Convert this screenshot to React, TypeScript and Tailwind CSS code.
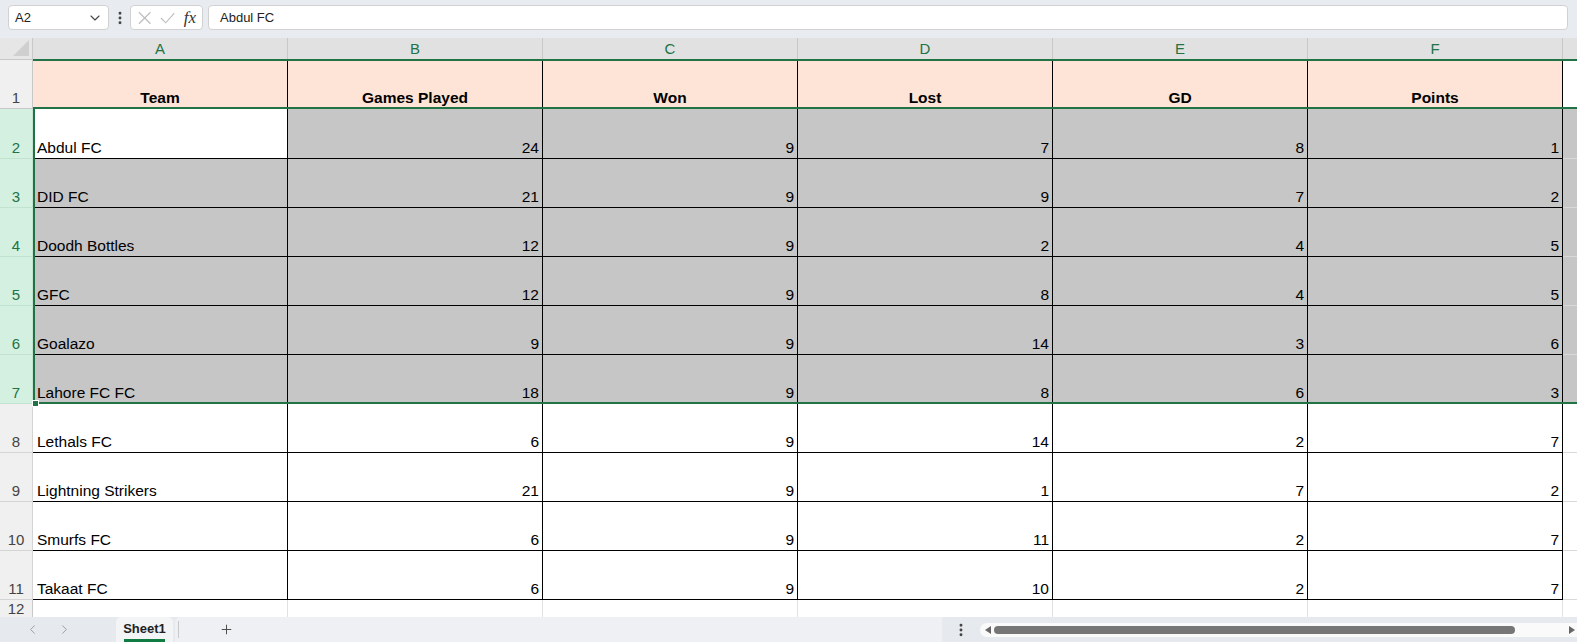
import { ChevronDown, ChevronLeft, ChevronRight, Plus, EllipsisVertical } from "lucide-react";

const teams = [
  { name: "Abdul FC", gp: 24, won: 9, lost: 7, gd: 8, pts: 1 },
  { name: "DID FC", gp: 21, won: 9, lost: 9, gd: 7, pts: 2 },
  { name: "Doodh Bottles", gp: 12, won: 9, lost: 2, gd: 4, pts: 5 },
  { name: "GFC", gp: 12, won: 9, lost: 8, gd: 4, pts: 5 },
  { name: "Goalazo", gp: 9, won: 9, lost: 14, gd: 3, pts: 6 },
  { name: "Lahore FC FC", gp: 18, won: 9, lost: 8, gd: 6, pts: 3 },
  { name: "Lethals FC", gp: 6, won: 9, lost: 14, gd: 2, pts: 7 },
  { name: "Lightning Strikers", gp: 21, won: 9, lost: 1, gd: 7, pts: 2 },
  { name: "Smurfs FC", gp: 6, won: 9, lost: 11, gd: 2, pts: 7 },
  { name: "Takaat FC", gp: 6, won: 9, lost: 10, gd: 2, pts: 7 },
];

const headers = ["Team", "Games Played", "Won", "Lost", "GD", "Points"];
const letters = ["A", "B", "C", "D", "E", "F"];

function FormulaBar() {
  return (
    <div className="flex h-[38px] items-start bg-[#e8ebef] pt-[5px]">
      <div className="ml-2 flex h-[25px] w-[101px] items-center justify-between rounded-[4px] border border-[#d1d1d1] bg-white pl-[6px] pr-[5px] text-[13px] text-[#222]">
        <span>A2</span>
        <ChevronDown className="h-4 w-4 text-[#444]" strokeWidth={1.6} />
      </div>
      <div className="flex h-[25px] w-[21px] items-center justify-center text-[#444]">
        <EllipsisVertical className="h-4 w-4" strokeWidth={2.4} />
      </div>
      <div className="flex h-[25px] w-[73px] items-center rounded-[4px] border border-[#d1d1d1] bg-white px-[6px]">
        <svg width="14" height="14" viewBox="0 0 14 14" className="ml-[1px]">
          <path d="M1 1 L13 13 M13 1 L1 13" stroke="#bdbdbd" strokeWidth="1.2" fill="none" />
        </svg>
        <svg width="16" height="14" viewBox="0 0 16 14" className="ml-[9px]">
          <path d="M1 7 L6 12 L15 2" stroke="#bdbdbd" strokeWidth="1.2" fill="none" />
        </svg>
        <span className="ml-[8px] text-[17px] italic text-[#333]" style={{ fontFamily: '"Liberation Serif", serif' }}>
          fx
        </span>
      </div>
      <div className="ml-[5px] mr-[9px] flex h-[25px] flex-1 items-center rounded-[4px] border border-[#d1d1d1] bg-white pl-[11px] text-[13px] text-[#222]">
        Abdul FC
      </div>
    </div>
  );
}

function Cell({ children, fill, align, bold }: { children?: React.ReactNode; fill: string; align: "left" | "right" | "center"; bold?: boolean }) {
  const alignCls = align === "left" ? "justify-start pl-[4px]" : align === "right" ? "justify-end pr-[3px]" : "justify-center";
  return (
    <div className={`flex items-end pb-[1px] border-r border-b border-black ${fill} ${alignCls} ${bold ? "font-bold" : ""}`}>
      <span className="leading-[18px]">{children}</span>
    </div>
  );
}

function Grid() {
  return (
    <div className="relative flex-1 overflow-hidden bg-white text-[15.5px] text-black">
      <div className="grid h-full grid-cols-[33px_repeat(6,255px)_1fr] grid-rows-[22px_49px_50px_repeat(9,49px)_1fr]">
        {/* column headers */}
        <div className="relative border-r border-b border-[#c8c8c8] bg-[#e6e6e6]">
          <svg width="16" height="16" viewBox="0 0 16 16" className="absolute bottom-[3px] right-[3px]">
            <path d="M16 0 L16 16 L0 16 Z" fill="#cfcfcf" />
          </svg>
        </div>
        {letters.map((l) => (
          <div key={l} className="flex items-center justify-center border-r border-[#c8c8c8] bg-[#e1e1e1] text-[15px] text-[#217346]">
            {l}
          </div>
        ))}
        <div className="bg-[#e1e1e1]" />

        {/* row 1 */}
        <div className="flex items-end justify-center border-r border-b border-[#c8c8c8] bg-[#f0f0f0] pb-[1px] text-[15px] text-[#444]">
          <span className="leading-[18px]">1</span>
        </div>
        {headers.map((h) => (
          <Cell key={h} fill="bg-[#fde4d6]" align="center" bold>
            {h}
          </Cell>
        ))}
        <div className="bg-white" />

        {teams.map((t, i) => {
          const selected = i < 6;
          const fill = selected ? "bg-[#c6c6c6]" : "bg-white";
          return (
            <div key={t.name} className="contents">
              <div
                className={`flex items-end justify-center border-r border-b pb-[1px] text-[15px] ${
                  selected ? "border-[#c3e3d1] bg-[#d3f0e0] text-[#217346]" : "border-[#d4d4d4] bg-[#f0f0f0] text-[#444]"
                }`}
              >
                <span className="leading-[18px]">{i + 2}</span>
              </div>
              <Cell fill={i === 0 ? "bg-white" : fill} align="left">
                {t.name}
              </Cell>
              <Cell fill={fill} align="right">{t.gp}</Cell>
              <Cell fill={fill} align="right">{t.won}</Cell>
              <Cell fill={fill} align="right">{t.lost}</Cell>
              <Cell fill={fill} align="right">{t.gd}</Cell>
              <Cell fill={fill} align="right">{t.pts}</Cell>
              <div className={`border-b border-[#d9d9d9] ${fill}`} />
            </div>
          );
        })}

        {/* row 12 */}
        <div className="flex items-start justify-center border-r border-[#c8c8c8] bg-[#f0f0f0] pt-[1px] text-[15px] text-[#444]">
          <span className="leading-[16px]">12</span>
        </div>
        {letters.map((l) => (
          <div key={l} className="border-r border-[#e1e1e1]" />
        ))}
        <div />
      </div>

      {/* selection overlay */}
      <div className="absolute left-[33px] right-0 top-[21px] h-[2px] bg-[#217346]" />
      <div className="absolute left-[33px] right-0 top-[69px] h-[2px] bg-[#217346]" />
      <div className="absolute left-[33px] right-0 top-[364px] h-[2px] bg-[#217346]" />
      <div className="absolute left-[33px] top-[70px] h-[296px] w-[2px] bg-[#217346]" />
      <div className="absolute left-[32px] top-[362px] h-[7px] w-[7px] bg-white" />
      <div className="absolute left-[33px] top-[363px] h-[5px] w-[5px] bg-[#217346]" />
    </div>
  );
}

function TabBar() {
  return (
    <div className="flex h-[25px] items-stretch bg-[#e6e9ed] text-[13px]">
      <div className="flex w-[116px] items-center pl-[25px] text-[#9a9a9a]">
        <ChevronLeft className="h-[15px] w-[15px]" strokeWidth={1.5} />
        <ChevronRight className="ml-[17px] h-[15px] w-[15px]" strokeWidth={1.5} />
      </div>
      <div className="relative flex w-[57px] items-center justify-center rounded-t-[5px] bg-[#f3f4f6] font-semibold text-[#222]">
        <span className="-mt-[1px]">Sheet1</span>
        <div className="absolute bottom-0 left-[8px] h-[3px] w-[41px] bg-[#107c41]" />
      </div>
      <div className="ml-[2px] flex w-[767px] items-center rounded-tl-[5px] bg-[#eef0f3]">
        <div className="ml-[3px] h-[17px] w-px bg-[#c8c8c8]" />
        <Plus className="ml-[40px] h-[15px] w-[15px] text-[#444]" strokeWidth={1.5} />
      </div>
      <div className="flex flex-1 items-center">
        <div className="flex w-[38px] justify-center text-[#444]">
          <EllipsisVertical className="h-4 w-4" strokeWidth={2.4} />
        </div>
        <div className="flex h-[14px] flex-1 items-center rounded-l-full bg-[#fafafa] pl-[5px]">
          <svg width="6" height="8" viewBox="0 0 6 8">
            <path d="M6 0 L0 4 L6 8 Z" fill="#666" />
          </svg>
          <div className="ml-[3px] h-[8px] w-[521px] rounded-full bg-[#767676]" />
          <div className="flex-1" />
          <svg width="6" height="8" viewBox="0 0 6 8" className="mr-[2px]">
            <path d="M0 0 L6 4 L0 8 Z" fill="#666" />
          </svg>
        </div>
      </div>
    </div>
  );
}

export default function App() {
  return (
    <div className="flex h-[642px] w-full flex-col overflow-hidden" style={{ fontFamily: '"Liberation Sans", Arial, sans-serif' }}>
      <FormulaBar />
      <Grid />
      <TabBar />
    </div>
  );
}
